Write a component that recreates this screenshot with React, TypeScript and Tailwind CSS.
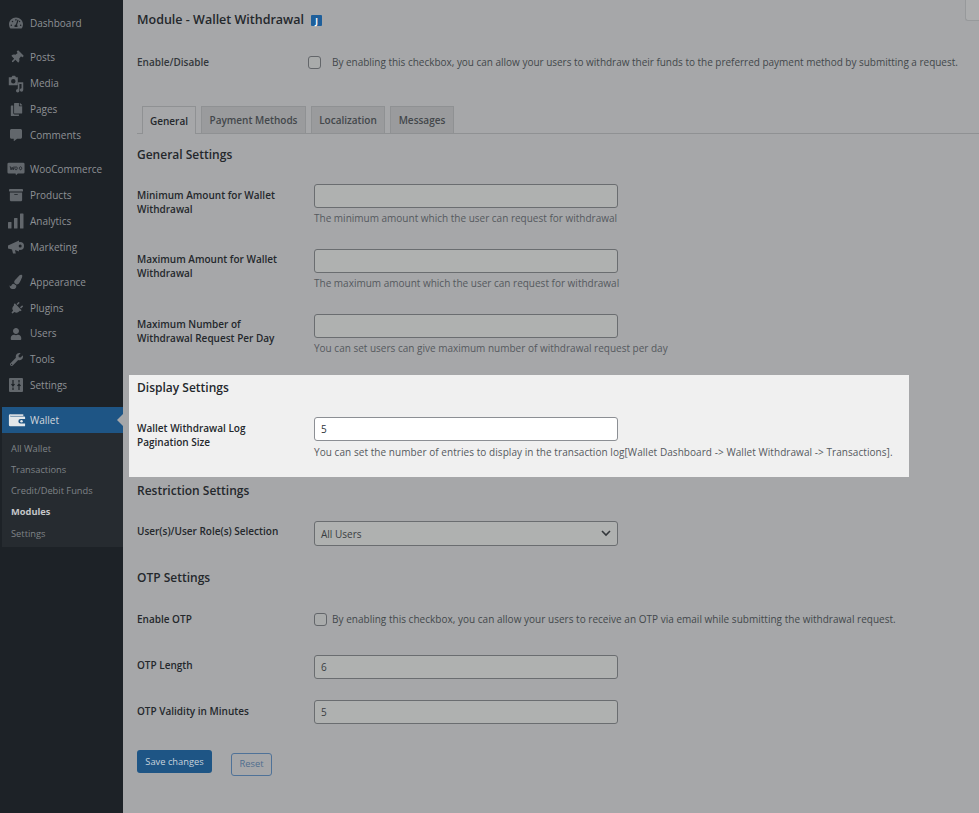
import React from "react";
import { FaTachometerAlt, FaThumbtack, FaCopy, FaCommentAlt, FaArchive, FaPaintBrush, FaPlug, FaUser, FaWrench } from "react-icons/fa";

const ic = "w-[18px] h-[18px] flex items-center justify-center text-[#62676c] shrink-0";

const Media = () => (
  <svg width="19" height="19" viewBox="0 0 20 20" fill="currentColor">
    <path d="M2 3h3l1-1.5h3L10 3h2v9H2zM7 5a2.500 2.500 0 1 0 0 5 2.500 2.500 0 0 0 0-5z" fillRule="evenodd" />
    <path d="M13 8h6v9a2 2 0 1 1-2-2V10h-2.500v8a2 2 0 1 1-2-2z" transform="translate(0 1) scale(.95)" />
  </svg>
);
const Woo = () => (
  <svg width="20" height="18" viewBox="0 0 20 18" fill="currentColor">
    <path d="M2 2h16a1.500 1.500 0 0 1 1.500 1.500v9A1.500 1.500 0 0 1 18 14h-6l-2 2-.5-2H2A1.500 1.500 0 0 1 .5 12.500v-9A1.500 1.500 0 0 1 2 2z" />
    <path d="M3.500 6l1 4 1.200-3 1.200 3 1-4M10 6.500a1.300 1.700 0 1 0 .1 0M15 6.500a1.300 1.700 0 1 0 .1 0" fill="none" stroke="#1d2227" strokeWidth=".9" />
  </svg>
);
const Bars = () => (
  <svg width="18" height="18" viewBox="0 0 18 18" fill="currentColor">
    <rect x="1" y="10" width="3.500" height="6.500" rx=".5" />
    <rect x="7" y="6" width="3.500" height="10.500" rx=".5" />
    <rect x="13" y="1.500" width="3.500" height="15" rx=".5" />
  </svg>
);
const Horn = () => (
  <svg width="18" height="18" viewBox="0 0 18 18" fill="currentColor">
    <path d="M1 7.500 12 2.500v11L8 12l.8 3.500H6L5 11.500 1 10.500z" />
    <circle cx="13" cy="8" r="4" />
    <circle cx="13.200" cy="8" r="1.500" fill="#1d2227" />
  </svg>
);
const Sliders = () => (
  <svg width="18" height="18" viewBox="0 0 18 18">
    <rect x="2" y="2" width="14" height="14" rx="1" fill="currentColor" />
    <path d="M6 4v5M4.500 8l1.500 2 1.500-2M6 11.500v2.500M12 14V9M10.500 10l1.500-2 1.500 2M12 4v2.500" stroke="#1d2227" strokeWidth="1.200" fill="none" />
  </svg>
);
const Wallet = () => (
  <svg width="20" height="18" viewBox="0 0 20 18">
    <path d="M2 2.500h15v2H2.500z" fill="#d3d9df" />
    <path d="M1 4a1.500 1.500 0 0 1 1.500-1.500V5H18a1 1 0 0 1 1 1v2h-5a2.500 2.500 0 0 0 0 5h5v2a1 1 0 0 1-1 1H2.500A1.500 1.500 0 0 1 1 14.500z" fill="#e3e7ea" />
    <circle cx="15" cy="10.500" r="1.400" fill="#e3e7ea" />
  </svg>
);

const MenuItem = ({ icon, label, mt, h }: { icon: React.ReactNode; label: string; mt?: string; h?: string }) => (
  <div className={`flex items-center pl-[7px] gap-[5px] text-[10px] text-[#8e9195] ${h ?? "h-[26px]"} ${mt ?? ""}`}>
    <span className={ic}>{icon}</span>
    <span>{label}</span>
  </div>
);

const Sidebar = () => (
  <aside className="w-[123px] shrink-0 bg-[#1d2227] pt-[10px] min-h-[813px]">
    <MenuItem icon={<FaTachometerAlt size={14} />} label="Dashboard" />
    <MenuItem mt="mt-[8px]" icon={<FaThumbtack size={13} className="rotate-45" />} label="Posts" />
    <MenuItem icon={<Media />} label="Media" />
    <MenuItem icon={<FaCopy size={13} />} label="Pages" />
    <MenuItem icon={<FaCommentAlt size={12} />} label="Comments" />
    <MenuItem mt="mt-[8px]" icon={<Woo />} label="WooCommerce" />
    <MenuItem icon={<FaArchive size={14} />} label="Products" />
    <MenuItem icon={<Bars />} label="Analytics" />
    <MenuItem icon={<Horn />} label="Marketing" />
    <MenuItem mt="mt-[9px]" icon={<FaPaintBrush size={14} className="rotate-[-5deg]" />} label="Appearance" />
    <MenuItem icon={<FaPlug size={13} className="rotate-45" />} label="Plugins" />
    <MenuItem h="h-[25px]" icon={<FaUser size={12} />} label="Users" />
    <MenuItem icon={<FaWrench size={13} />} label="Tools" />
    <MenuItem icon={<Sliders />} label="Settings" />
    <div className="ml-[2px] mt-[9px]">
      <div className="relative h-[26px] bg-[#1e5585] flex items-center pl-[6px] gap-[4px] text-[10px] text-[#d3d8dd]">
        <span className="w-[18px] h-[18px] flex items-center justify-center"><Wallet /></span>
        <span>Wallet</span>
        <span className="absolute right-0 top-[7px] border-y-[6px] border-y-transparent border-r-[6px] border-r-[#a6a7a9]" />
      </div>
      <div className="bg-[#262b30] h-[114px] pt-[6px] pl-[9px] text-[9.3px] text-[#7f8387]">
        <div className="h-[20px] leading-[20px]">All Wallet</div>
        <div className="h-[21px] leading-[21px]">Transactions</div>
        <div className="h-[21px] leading-[21px]">Credit/Debit Funds</div>
        <div className="h-[22px] leading-[22px] font-bold text-[#c4c6c8]">Modules</div>
        <div className="h-[22px] leading-[22px]">Settings</div>
      </div>
    </div>
  </aside>
);

const Heading = ({ children, className }: { children: React.ReactNode; className?: string }) => (
  <h2 className={`text-[12px] font-semibold leading-[18px] text-[#24282c] ${className ?? ""}`}>{children}</h2>
);

const Row = ({ label, children, className }: { label: React.ReactNode; children: React.ReactNode; className?: string }) => (
  <div className={`flex ${className ?? ""}`}>
    <div className="w-[177px] shrink-0 text-[10px] font-semibold leading-[14px] text-[#24282c]">{label}</div>
    <div className="flex-1">{children}</div>
  </div>
);

const Field = ({ value, light }: { value?: string; light?: boolean }) => (
  <div className={`w-[304px] h-[24px] rounded-[3px] border flex items-center pl-[6px] text-[10px] ${light ? "bg-white border-[#8c8f94] text-[#2c3338]" : "bg-[#afb1b0] border-[#6a6d70] text-[#3a3e42]"}`}>
    {value}
  </div>
);

const Desc = ({ children, className }: { children: React.ReactNode; className?: string }) => (
  <p className={`text-[10px] leading-[14px] text-[#55595e] whitespace-nowrap ${className ?? "mt-[3px]"}`}>{children}</p>
);

const Check = () => (
  <span className="w-[13px] h-[13px] rounded-[3px] border border-[#63666a] bg-[#a9abab] shrink-0" />
);

const Tab = ({ label, active, w }: { label: string; active?: boolean; w: string }) => (
  <div className={`pt-[1px] flex items-center justify-center text-[10px] font-semibold border border-b-0 border-[#8f9193] ${w} ${active ? "bg-[#a6a7a9] text-[#24282c] h-[28px] -mb-px" : "bg-[#9a9b9d] text-[#43474b] h-[27px]"}`}>
    {label}
  </div>
);

export default function App() {
  return (
    <div className="flex w-[979px] h-[813px] overflow-hidden bg-[#a6a7a9] [font-family:'Open_Sans','Noto_Sans',sans-serif]">
      <Sidebar />
      <main className="relative flex-1 pl-[14px]">
        <div className="absolute right-0 top-0 w-[14px] h-[21px] bg-[#acadae] border-l border-b border-[#97999b] rounded-bl-[3px]" />
        <div className="flex items-center gap-[7px] pt-[11px] h-[29px]">
          <span className="text-[12.5px] font-semibold leading-[18px] text-[#24282c]">Module - Wallet Withdrawal</span>
          <span className="w-[11px] h-[11px] rounded-[1px] bg-[#1e5f9b] text-white text-[8px] leading-[11px] text-center font-bold">J</span>
        </div>
        <div className="flex items-center mt-[25px] h-[16px]">
          <span className="w-[171px] text-[10px] font-semibold text-[#33373b]">Enable/Disable</span>
          <Check />
          <span className="ml-[11px] text-[10px] tracking-[-0.02px] text-[#43474b] whitespace-nowrap">By enabling this checkbox, you can allow your users to withdraw their funds to the preferred payment method by submitting a request.</span>
        </div>
        <div className="flex gap-[5px] mt-[36px] h-[28px] pl-[5px] border-b border-[#8f9193] items-end">
          <Tab label="General" active w="w-[54px]" />
          <Tab label="Payment Methods" w="w-[105px]" />
          <Tab label="Localization" w="w-[74px]" />
          <Tab label="Messages" w="w-[64px]" />
        </div>
        <Heading className="mt-[12px]">General Settings</Heading>

        <Row label={<span className="block pt-[4px]">Minimum Amount for Wallet<br />Withdrawal</span>} className="mt-[20px]">
          <Field />
          <Desc>The minimum amount which the user can request for withdrawal</Desc>
        </Row>
        <Row label={<span className="block pt-[3px]">Maximum Amount for Wallet<br />Withdrawal</span>} className="mt-[24px]">
          <Field />
          <Desc>The maximum amount which the user can request for withdrawal</Desc>
        </Row>
        <Row label={<span className="block pt-[3px]">Maximum Number of<br />Withdrawal Request Per Day</span>} className="mt-[24px]">
          <Field />
          <Desc>You can set users can give maximum number of withdrawal request per day</Desc>
        </Row>

        <section className="mt-[20px] -ml-[8px] w-[780px] h-[102px] bg-[#f0f0f0] pl-[8px] pt-[4px]">
          <Heading>Display Settings</Heading>
          <Row label={<span className="block pt-[4px]">Wallet Withdrawal Log<br />Pagination Size</span>} className="mt-[20px]">
            <Field value="5" light />
            <Desc className="mt-[4px] tracking-[0.06px]">You can set the number of entries to display in the transaction log[Wallet Dashboard -&gt; Wallet Withdrawal -&gt; Transactions].</Desc>
          </Row>
        </section>

        <Heading className="mt-[5px]">Restriction Settings</Heading>
        <Row label={<span className="block pt-[3px]">User(s)/User Role(s) Selection</span>} className="mt-[21px]">
          <div className="w-[304px] h-[25px] rounded-[3px] border border-[#6a6d70] bg-[#afb1b0] flex items-center justify-between pl-[6px] pr-[6px] text-[10px] text-[#3a3e42]">
            <span className="pt-[1px]">All Users</span>
            <svg width="10" height="7" viewBox="0 0 10 7" fill="none" stroke="#33373b" strokeWidth="1.600"><path d="M1 1l4 4 4-4" /></svg>
          </div>
        </Row>

        <Heading className="mt-[23px]">OTP Settings</Heading>
        <div className="flex items-center mt-[24px] h-[16px]">
          <span className="w-[177px] text-[10px] font-semibold text-[#24282c]">Enable OTP</span>
          <Check />
          <span className="ml-[5px] text-[10px] tracking-[0.02px] text-[#43474b] whitespace-nowrap">By enabling this checkbox, you can allow your users to receive an OTP via email while submitting the withdrawal request.</span>
        </div>
        <Row label={<span className="block pt-[3px]">OTP Length</span>} className="mt-[28px]">
          <Field value="6" />
        </Row>
        <Row label={<span className="block pt-[4px]">OTP Validity in Minutes</span>} className="mt-[21px]">
          <Field value="5" />
        </Row>
        <div className="flex items-start gap-[19px] mt-[26px]">
          <div className="h-[23px] w-[75px] rounded-[3px] bg-[#1e5585] text-[9.3px] text-[#c9d3dc] flex items-center justify-center">Save changes</div>
          <div className="h-[23px] w-[41px] mt-[3px] pb-[1px] rounded-[3px] border border-[#4f7298] text-[9.3px] text-[#4f6d8e] flex items-center justify-center">Reset</div>
        </div>
      </main>
    </div>
  );
}
